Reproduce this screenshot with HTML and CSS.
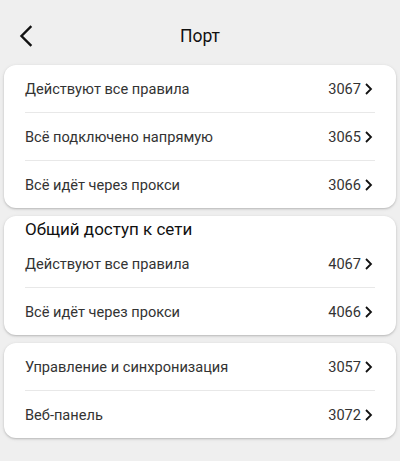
FILE: index.html
```html
<!DOCTYPE html>
<html lang="ru">
<head>
<meta charset="utf-8">
<link rel="stylesheet" href="styles.css">
</head>
<body>
<div class="screen">
  <header class="topbar">
    <svg class="back" width="16" height="24" viewBox="0 0 16 24"><path d="M12.5 3 L3.5 12 L12.5 21" fill="none" stroke="#111" stroke-width="2.4" stroke-linecap="square"/></svg>
    <h1 class="title">Порт</h1>
  </header>

  <section class="card">
    <div class="row"><span class="label">Действуют все правила</span><span class="value">3067<svg class="chev" width="9" height="14" viewBox="0 0 9 14"><path d="M2 2 L7 7 L2 12" fill="none" stroke="#111" stroke-width="1.8"/></svg></span></div>
    <div class="divider"></div>
    <div class="row"><span class="label">Всё подключено напрямую</span><span class="value">3065<svg class="chev" width="9" height="14" viewBox="0 0 9 14"><path d="M2 2 L7 7 L2 12" fill="none" stroke="#111" stroke-width="1.8"/></svg></span></div>
    <div class="divider"></div>
    <div class="row"><span class="label">Всё идёт через прокси</span><span class="value">3066<svg class="chev" width="9" height="14" viewBox="0 0 9 14"><path d="M2 2 L7 7 L2 12" fill="none" stroke="#111" stroke-width="1.8"/></svg></span></div>
  </section>

  <section class="card">
    <h2 class="card-title">Общий доступ к сети</h2>
    <div class="row"><span class="label">Действуют все правила</span><span class="value">4067<svg class="chev" width="9" height="14" viewBox="0 0 9 14"><path d="M2 2 L7 7 L2 12" fill="none" stroke="#111" stroke-width="1.8"/></svg></span></div>
    <div class="divider"></div>
    <div class="row"><span class="label">Всё идёт через прокси</span><span class="value">4066<svg class="chev" width="9" height="14" viewBox="0 0 9 14"><path d="M2 2 L7 7 L2 12" fill="none" stroke="#111" stroke-width="1.8"/></svg></span></div>
  </section>

  <section class="card">
    <div class="row"><span class="label">Управление и синхронизация</span><span class="value">3057<svg class="chev" width="9" height="14" viewBox="0 0 9 14"><path d="M2 2 L7 7 L2 12" fill="none" stroke="#111" stroke-width="1.8"/></svg></span></div>
    <div class="divider"></div>
    <div class="row"><span class="label">Веб-панель</span><span class="value">3072<svg class="chev" width="9" height="14" viewBox="0 0 9 14"><path d="M2 2 L7 7 L2 12" fill="none" stroke="#111" stroke-width="1.8"/></svg></span></div>
  </section>
</div>
</body>
</html>
```

FILE: styles.css
```css
* { box-sizing: border-box; }
html, body {
  margin: 0;
  padding: 0;
  background: #efefef;
  font-family: Roboto, "Noto Sans", "Liberation Sans", sans-serif;
}
.screen {
  width: 400px;
  height: 461px;
  display: flex;
  flex-direction: column;
  gap: 8px;
  padding: 0 4px;
}
.topbar {
  height: 57px;
  display: flex;
  align-items: center;
  justify-content: center;
  position: relative;
}
.back {
  position: absolute;
  left: 14px;
  top: 24px;
}
.title {
  margin: 0;
  font-size: 17.5px;
  font-weight: 400;
  color: #111;
  padding-top: 14px;
}
.card {
  background: #fff;
  border-radius: 12px;
  box-shadow: 0 1px 2px rgba(0,0,0,0.18), 0 1px 4px rgba(0,0,0,0.08);
  display: flex;
  flex-direction: column;
}
.card-title {
  margin: 0;
  height: 24px;
  padding: 1px 21px 0;
  font-size: 17px;
  font-weight: 400;
  color: #111;
  line-height: 24px;
}
.row {
  height: 47px;
  display: flex;
  align-items: center;
  justify-content: space-between;
  padding: 0 21px;
  font-size: 14.6px;
  color: #333;
}
.value {
  display: flex;
  align-items: center;
  gap: 3px;
  margin-right: 2px;
}
.chev { display: block; }
.divider {
  height: 1px;
  margin: 0 21px;
  background: #e8e8e8;
}
```
